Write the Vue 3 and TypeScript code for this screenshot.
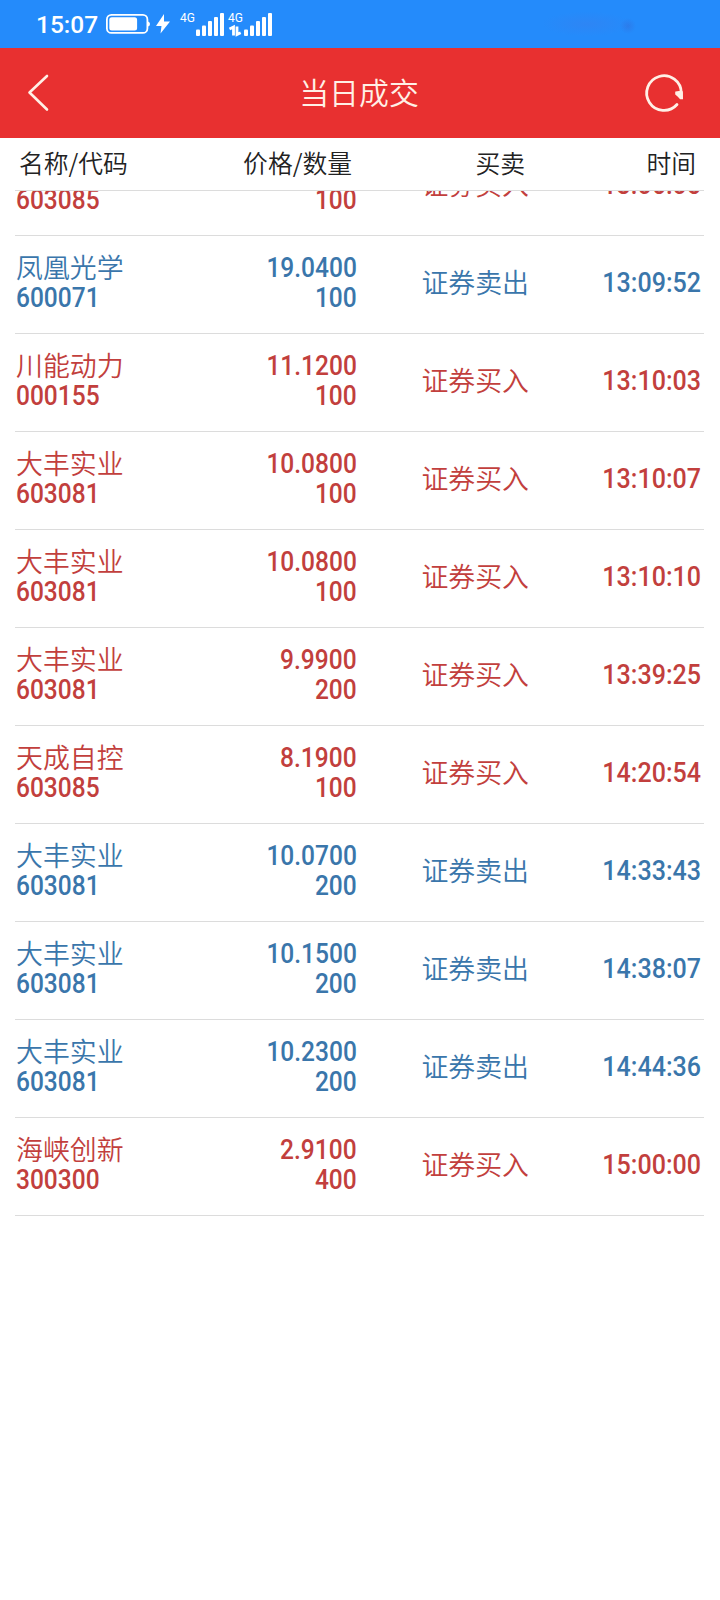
<script setup lang="ts">
interface Trade {
  name?: string
  code: string
  price?: string
  qty: string
  side: 'buy' | 'sell'
  time: string
}

const trades: Trade[] = [
  { code: '603085', qty: '100', side: 'buy', time: '13:06:05' },
  { name: '凤凰光学', code: '600071', price: '19.0400', qty: '100', side: 'sell', time: '13:09:52' },
  { name: '川能动力', code: '000155', price: '11.1200', qty: '100', side: 'buy', time: '13:10:03' },
  { name: '大丰实业', code: '603081', price: '10.0800', qty: '100', side: 'buy', time: '13:10:07' },
  { name: '大丰实业', code: '603081', price: '10.0800', qty: '100', side: 'buy', time: '13:10:10' },
  { name: '大丰实业', code: '603081', price: '9.9900', qty: '200', side: 'buy', time: '13:39:25' },
  { name: '天成自控', code: '603085', price: '8.1900', qty: '100', side: 'buy', time: '14:20:54' },
  { name: '大丰实业', code: '603081', price: '10.0700', qty: '200', side: 'sell', time: '14:33:43' },
  { name: '大丰实业', code: '603081', price: '10.1500', qty: '200', side: 'sell', time: '14:38:07' },
  { name: '大丰实业', code: '603081', price: '10.2300', qty: '200', side: 'sell', time: '14:44:36' },
  { name: '海峡创新', code: '300300', price: '2.9100', qty: '400', side: 'buy', time: '15:00:00' },
]
const sideLabel = { buy: '证券买入', sell: '证券卖出' }
</script>

<template>
  <div class="screen">
    <div class="status">
      <span class="clock">15:07</span>
      <svg class="indicators" width="180" height="48" viewBox="100 0 180 48">
        <rect x="106.900" y="14.900" width="40.500" height="18" rx="4.500" fill="none" stroke="#fff" stroke-width="1.800" />
        <rect x="109.300" y="17.200" width="27.800" height="13.400" rx="2.500" fill="#fff" />
        <path d="M148 21.500q2 .5 2 2.500t-2 2.500z" fill="#fff" />
        <path d="M164 14L156 26h5.500L160.500 33.500L170 21.500h-6z" fill="#fff" />
        <g class="net" fill="#fff">
          <text x="180" y="21.500">4G</text>
          <text x="228" y="21.500">4G</text>
        </g>
        <g fill="#fff">
          <rect x="196" y="29.500" width="4" height="6.500" rx="1" />
          <rect x="202" y="25.500" width="4" height="10.500" rx="1" />
          <rect x="208" y="21" width="4" height="15" rx="1" />
          <rect x="214" y="17" width="4" height="19" rx="1" />
          <rect x="220" y="13" width="4" height="23" rx="1" />
          <rect x="244" y="29.500" width="4" height="6.500" rx="1" />
          <rect x="250" y="25.500" width="4" height="10.500" rx="1" />
          <rect x="256" y="21" width="4" height="15" rx="1" />
          <rect x="262" y="17" width="4" height="19" rx="1" />
          <rect x="268" y="13" width="4" height="23" rx="1" />
        </g>
        <path d="M229.500 29L233.500 27V35.500M237 26.500V34.500L240.700 32.800" fill="none" stroke="#fff" stroke-width="2.800" />
      </svg>
      <div class="smudge"></div>
    </div>

    <header class="bar">
      <svg width="30" height="44" viewBox="0 0 30 44">
        <path d="M23 5L5.500 21.500L23 38.500" fill="none" stroke="#fff0e6" stroke-width="2.600" stroke-linecap="round" stroke-linejoin="round" />
      </svg>
      <h1>当日成交</h1>
      <svg width="44" height="44" viewBox="0 0 44 44">
        <path d="M35 33.500A17.300 17.300 0 1 1 39.300 22V26" fill="none" stroke="#fff0e6" stroke-width="2.800" stroke-linecap="round" />
        <path d="M34 21.300Q36 20.300 40 21L40.200 27.400H38.500Q36.500 24.800 34 23z" fill="#fff0e6" stroke="#fff0e6" stroke-width="1.600" />
      </svg>
    </header>

    <div class="head">
      <span>名称/代码</span>
      <span>价格/数量</span>
      <span>买卖</span>
      <span>时间</span>
    </div>

    <main class="list">
      <div v-for="t in trades" :key="t.time" class="row" :class="t.side">
        <div class="cell title">
          <span v-if="t.name" class="cjk">{{ t.name }}</span>
          <span class="num">{{ t.code }}</span>
        </div>
        <div class="cell amount">
          <span v-if="t.price" class="num">{{ t.price }}</span>
          <span class="num">{{ t.qty }}</span>
        </div>
        <span class="cjk side">{{ sideLabel[t.side] }}</span>
        <span class="num time">{{ t.time }}</span>
      </div>
    </main>
  </div>
</template>

<style>
body {
  margin: 0;
  background: #fff;
}
</style>

<style scoped>
.screen {
  width: 720px;
  height: 1600px;
  overflow: hidden;
  background: #fff;
  display: flex;
  flex-direction: column;
  font-family: Roboto, 'Noto Sans CJK SC', sans-serif;
}
.status {
  height: 48px;
  flex: none;
  display: flex;
  align-items: center;
  background: #248bfb;
  color: #fff;
  padding-left: 36px;
}
.clock {
  width: 64px;
  font-size: 24.500px;
  font-weight: 500;
  line-height: 48px;
  padding-top: 1px;
  white-space: nowrap;
}
.net text {
  font: 400 12px Roboto, sans-serif;
}
.smudge {
  width: 100px;
  height: 30px;
  margin-left: 262px;
  background:
    radial-gradient(circle at 86px 17px, rgba(50, 110, 220, 0.5), transparent 8px),
    radial-gradient(ellipse at 45px 15px, rgba(60, 125, 235, 0.4), transparent 45px);
}
.bar {
  height: 90px;
  box-sizing: border-box;
  flex: none;
  display: flex;
  align-items: center;
  justify-content: space-between;
  background: #e83030;
  padding: 0 34px 0 24px;
}
.bar h1 {
  margin: 0 0 4px 22px;
  font-size: 29.900px;
  line-height: 40px;
  font-weight: 350;
  color: #fff0e6;
  font-family: 'Noto Sans CJK SC', sans-serif;
}
.head {
  height: 53px;
  box-sizing: border-box;
  flex: none;
  display: grid;
  grid-template-columns: 185px 148px 173px 171px;
  margin: 0 16px 0 15px;
  padding-left: 4px;
  line-height: 48px;
  font-size: 24.800px;
  font-weight: 350;
  color: #222;
  border-bottom: 1px solid #dcdcdc;
  font-family: 'Noto Sans CJK SC', sans-serif;
}
.head span:not(:first-child) {
  text-align: right;
}
.list {
  flex: 1;
  min-height: 0;
  overflow: hidden;
  display: flex;
  flex-direction: column;
  justify-content: flex-end;
  padding-bottom: 384px;
}
.row {
  height: 98px;
  flex: none;
  box-sizing: border-box;
  margin: 0 16px 0 15px;
  padding: 16px 0 19px;
  border-bottom: 1px solid #dcdcdc;
  display: grid;
  grid-template-columns: 180px 162px 172px 172px;
  align-items: center;
}
.buy {
  color: #c23f3d;
}
.sell {
  color: #3a76ab;
}
.cell {
  height: 60px;
  display: flex;
  flex-direction: column;
  justify-content: flex-end;
}
.title {
  padding-left: 1px;
}
.amount {
  align-items: flex-end;
}
.cjk {
  font-family: 'Noto Sans CJK SC', sans-serif;
  font-size: 26.900px;
  line-height: 27px;
  padding-bottom: 3px;
  font-weight: 350;
  white-space: nowrap;
}
.num {
  font-size: 26.800px;
  line-height: 30px;
  font-weight: 500;
  white-space: nowrap;
  transform: scaleX(0.915);
  transform-origin: left;
}
.amount .num,
.time {
  transform-origin: right;
}
.num.time {
  transform: scaleX(0.935);
}
.side,
.time {
  text-align: right;
}
</style>
